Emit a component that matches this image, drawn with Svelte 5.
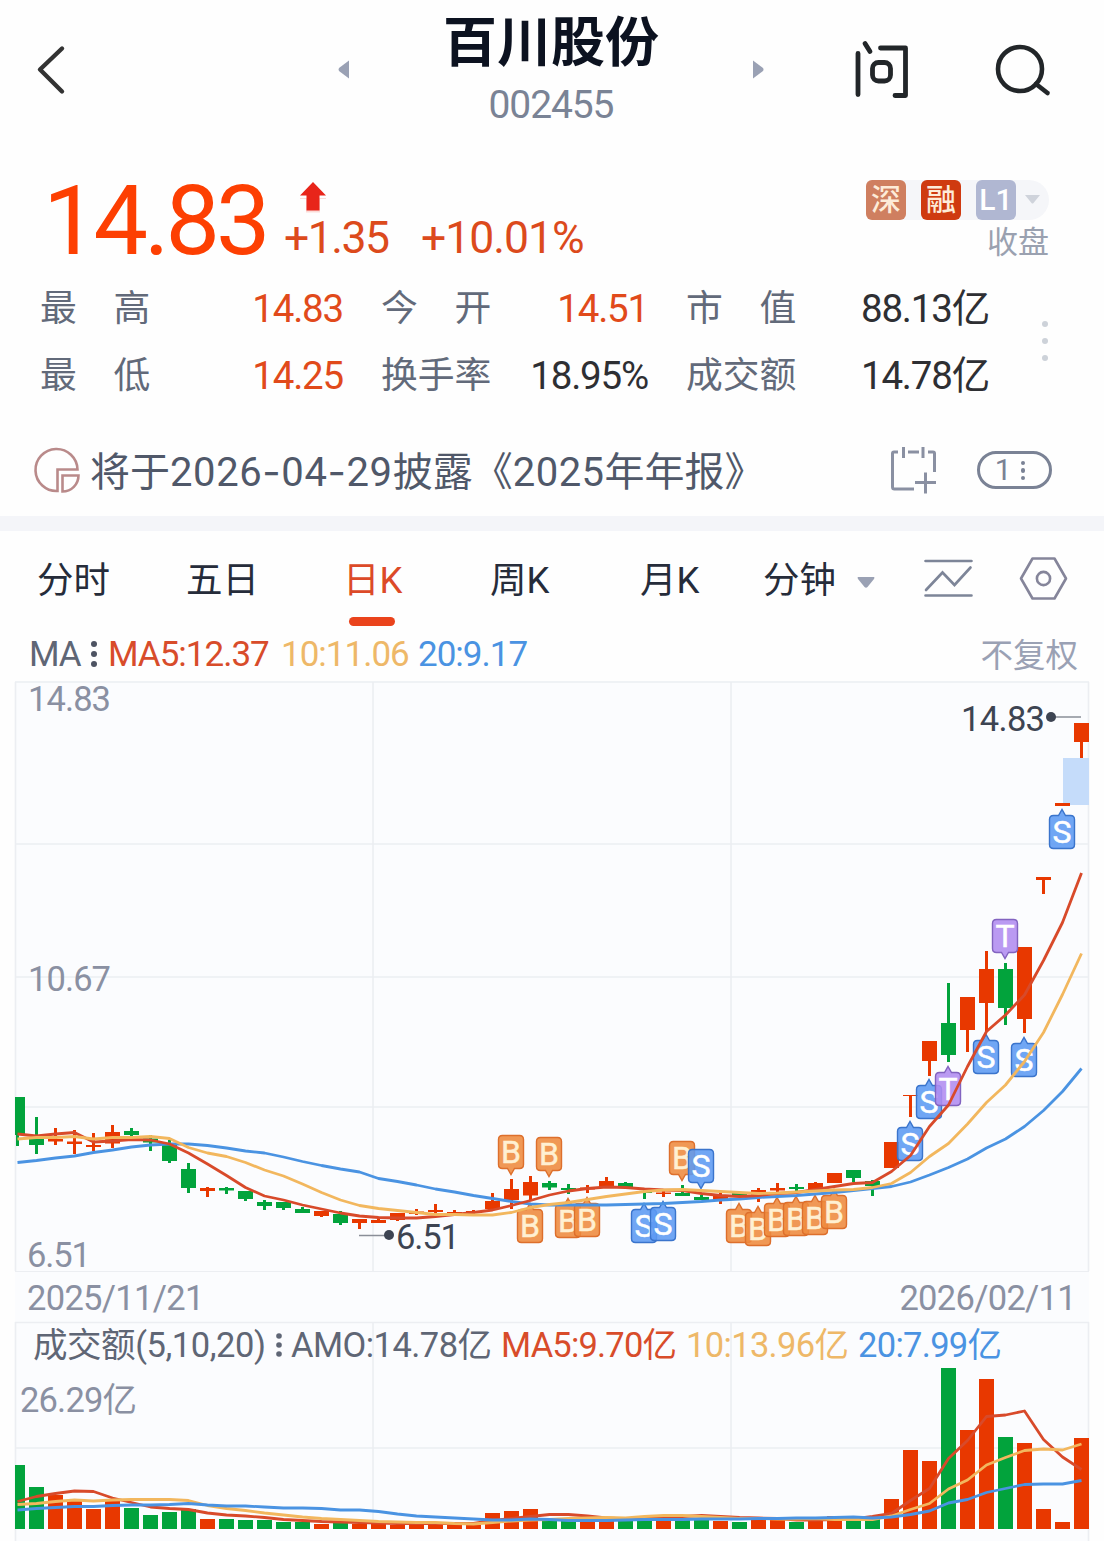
<script lang="ts">
  type Marker = { i: number; y: number; kind: 'B' | 'S' | 'T'; below: boolean };

  const stats = [
    [
      { label: '最　高', value: '14.83', up: true },
      { label: '今　开', value: '14.51', up: true },
      { label: '市　值', value: '88.13亿', up: false },
    ],
    [
      { label: '最　低', value: '14.25', up: true },
      { label: '换手率', value: '18.95%', up: false },
      { label: '成交额', value: '14.78亿', up: false },
    ],
  ];

  const tabs = ['分时', '五日', '日K', '周K', '月K'];
  let active = $state('日K');

  // body top, body bottom, high, low, 1 = up
  const candles = [
    [1097, 1135, 1097, 1146, 0], [1139, 1145, 1117, 1154, 0], [1139, 1141.5, 1128, 1145, 1], [1141.5, 1144, 1130, 1154, 1],
    [1145, 1147, 1133, 1151, 1], [1132, 1143.5, 1125, 1148, 1], [1131, 1135, 1128, 1140, 0], [1138.5, 1142.5, 1135, 1151, 0],
    [1145, 1161, 1140, 1163, 0], [1169, 1188, 1163, 1193, 0], [1188, 1191, 1187, 1197, 1], [1188, 1190.5, 1187, 1194, 0],
    [1191, 1199, 1191, 1201, 0], [1202, 1206, 1200, 1210, 0], [1202, 1208, 1202, 1210, 0], [1209, 1213, 1207, 1213, 0],
    [1211, 1216, 1211, 1217, 1], [1214, 1223, 1211, 1225, 0], [1219, 1223, 1219, 1229, 1], [1220, 1223, 1217, 1223, 1],
    [1213, 1220, 1213, 1221, 1], [1211.5, 1214, 1209, 1215, 1], [1210, 1212, 1204, 1214, 1], [1212, 1214, 1210, 1214, 1],
    [1211, 1213, 1210, 1214, 1], [1201, 1209, 1193, 1211, 1], [1189, 1200, 1179, 1209, 1], [1182, 1195.5, 1176, 1200, 1],
    [1183, 1187.5, 1181, 1190, 0], [1188, 1190, 1184, 1194, 0], [1187.5, 1189.5, 1185, 1193, 1], [1181, 1187, 1177, 1187, 1],
    [1183, 1187, 1182, 1188, 0], [1191, 1193, 1189, 1199, 0], [1192.5, 1194, 1190, 1197, 1], [1193, 1196, 1185, 1196, 0],
    [1197, 1200, 1195, 1200, 0], [1195, 1200.5, 1193, 1204, 1], [1193, 1196, 1193, 1196, 0], [1190, 1197, 1188, 1202, 1],
    [1188, 1190.5, 1183, 1193, 1], [1187, 1189, 1184, 1193, 0], [1183, 1190, 1182, 1190, 1], [1173, 1183, 1173, 1183, 1],
    [1170, 1178, 1170, 1182, 0], [1181, 1186, 1180, 1196, 0], [1142, 1168, 1142, 1168, 1], [1095, 1096, 1095, 1117, 1],
    [1041, 1061, 1041, 1076, 1], [1023, 1055, 983, 1062, 0], [997, 1030, 997, 1052, 1], [969, 1003, 951, 1031, 1],
    [969, 1008, 963, 1025, 0], [947, 1019, 947, 1033, 1], [877, 880, 877, 894, 1], [803, 806, 803, 806, 1],
    [723, 742, 723, 758, 1],
  ];

  const ma5 = [
    1134, 1136, 1134, 1132.5, 1142, 1141, 1139.5, 1140, 1144, 1153, 1164, 1175.5, 1187.5, 1196, 1200, 1205, 1209, 1213, 1216,
    1217.5, 1218, 1218, 1216.5, 1214.5, 1212.5, 1210, 1205.5, 1200.5, 1195, 1191, 1188.5, 1187, 1187.5, 1189, 1190, 1190.5,
    1193.5, 1195.5, 1196.5, 1195.5, 1193.5, 1192.5, 1189.5, 1186.5, 1183.5, 1182.5, 1171.5, 1155.5, 1126.5, 1105, 1066.5,
    1031.5, 1015, 995, 960.5, 922.5, 873,
  ];
  const ma10 = [
    1139, 1137.5, 1137.5, 1136.5, 1139, 1137.5, 1137.5, 1136.5, 1138.5, 1147.5, 1153, 1156.5, 1162.5, 1170, 1176, 1184,
    1192.5, 1200, 1205.5, 1208.5, 1210.5, 1212.5, 1214.5, 1214.5, 1215, 1215, 1212.5, 1207.5, 1204.5, 1202.5, 1199.5, 1196.5,
    1194, 1191.5, 1190, 1189.5, 1190.5, 1191.5, 1192.5, 1193.5, 1193, 1192, 1191, 1190, 1189.5, 1187.5, 1183.5, 1172.5,
    1156.5, 1143.5, 1124, 1102.5, 1085, 1061.5, 1032.5, 994.5, 953.5,
  ];
  const ma20 = [
    1162.5, 1160.5, 1158, 1156, 1152.5, 1150, 1147, 1145, 1144, 1144, 1145.5, 1148, 1151, 1153, 1157, 1161.5, 1165.5, 1169,
    1172, 1178.5, 1181.5, 1185, 1189, 1192, 1195.5, 1198.5, 1201.5, 1204, 1205, 1205, 1205, 1205, 1204.5, 1204, 1203.5,
    1202.5, 1201.5, 1200, 1199, 1197.5, 1196.5, 1195.5, 1194, 1192.5, 1190.5, 1188.5, 1186.5, 1182, 1175, 1167.5, 1159, 1148,
    1139, 1126.5, 1110.5, 1091.5, 1068.5,
  ];

  const markers: Marker[] = [
    { i: 26, y: 1135, kind: 'B', below: false },
    { i: 27, y: 1209, kind: 'B', below: true },
    { i: 28, y: 1137, kind: 'B', below: false },
    { i: 29, y: 1204, kind: 'B', below: true },
    { i: 30, y: 1203, kind: 'B', below: true },
    { i: 33, y: 1209, kind: 'S', below: true },
    { i: 34, y: 1207, kind: 'S', below: true },
    { i: 35, y: 1141, kind: 'B', below: false },
    { i: 36, y: 1149, kind: 'S', below: false },
    { i: 38, y: 1209, kind: 'B', below: true },
    { i: 39, y: 1212, kind: 'B', below: true },
    { i: 40, y: 1203, kind: 'B', below: true },
    { i: 41, y: 1202, kind: 'B', below: true },
    { i: 42, y: 1201, kind: 'B', below: true },
    { i: 43, y: 1195, kind: 'B', below: true },
    { i: 47, y: 1127, kind: 'S', below: true },
    { i: 48, y: 1085, kind: 'S', below: true },
    { i: 49, y: 1072, kind: 'T', below: true },
    { i: 51, y: 1040, kind: 'S', below: true },
    { i: 52, y: 919, kind: 'T', below: false },
    { i: 53, y: 1043, kind: 'S', below: true },
    { i: 55, y: 815, kind: 'S', below: true },
  ];

  const volTops = [
    1465, 1487, 1495, 1501, 1509, 1500, 1508, 1515, 1512, 1509, 1519, 1519, 1520, 1520, 1522, 1522, 1524, 1523, 1524, 1524,
    1525, 1525, 1525, 1525, 1525, 1513, 1511, 1509, 1521, 1520, 1521, 1521, 1520, 1520, 1521, 1520, 1519, 1521, 1522, 1519,
    1519, 1522, 1520, 1516, 1518, 1519, 1499, 1450, 1461, 1368, 1430, 1379, 1437, 1443, 1509, 1522, 1438,
  ];
  const vol5 = [
    1501.5, 1496.5, 1493.5, 1491, 1491.5, 1498, 1502.5, 1507, 1508.5, 1509.5, 1513, 1515, 1516, 1517.5, 1519.5, 1520.5,
    1521.5, 1522, 1522.5, 1523, 1523.5, 1523.5, 1523.5, 1523.5, 1523.5, 1520.5, 1518.5, 1516.5, 1514.5, 1514.5, 1516, 1518,
    1519, 1518, 1517.5, 1516.5, 1515.5, 1516.5, 1517.5, 1518, 1518.5, 1520, 1520, 1519.5, 1519, 1516.5, 1513.5, 1500.5,
    1488.5, 1458.5, 1440.5, 1416.5, 1415, 1411, 1439.5, 1457, 1469.5,
  ];
  const vol10 = [
    1504.5, 1503.5, 1501.5, 1500, 1501, 1500, 1499.5, 1499.5, 1499.5, 1500.5, 1505.5, 1508.5, 1510.5, 1513, 1515, 1517,
    1518.5, 1519.5, 1520.5, 1521.5, 1522, 1522.5, 1522.5, 1523.5, 1524, 1522.5, 1521, 1520, 1519.5, 1518.5, 1518, 1517.5,
    1518, 1516.5, 1515.5, 1515.5, 1516.5, 1517.5, 1518.5, 1518.5, 1519, 1519, 1518.5, 1519.5, 1519.5, 1519.5, 1516, 1509.5,
    1503.5, 1489, 1480, 1465, 1457.5, 1450.5, 1449, 1450, 1444,
  ];
  const vol20 = [
    1510, 1508.5, 1507.5, 1506.5, 1506.5, 1505.5, 1505, 1505, 1504.5, 1503.5, 1505, 1506, 1506, 1507, 1508, 1508, 1508.5,
    1510, 1510, 1511.5, 1514, 1516, 1517, 1518, 1519, 1520, 1520, 1519, 1519.5, 1520.5, 1520.5, 1520.5, 1520, 1519.5, 1519.5,
    1519.5, 1519, 1519, 1519, 1518.5, 1518.5, 1518, 1518, 1517.5, 1517, 1518, 1517, 1514.5, 1511, 1503, 1499.5, 1492.5,
    1488.5, 1484.5, 1484, 1484, 1480.5,
  ];

  const cx = (i: number) => 17.5 + i * 19;
  const points = (ys: number[]) => ys.map((y, i) => `${cx(i)},${y}`).join(' ');

  // the first bar is cut by the left edge of the plot
  const barX = (i: number) => Math.max(15, cx(i) - 7.5);
  const barW = (i: number) => Math.min(1089, cx(i) + 7.5) - barX(i);

  // rounded tag with a small pointer towards its candle
  function tagPath(m: Marker): string {
    const x = cx(m.i) - 13;
    const t = m.y + 0.5;
    const b = t + 33;
    const tip = m.below
      ? `M${x + 4} ${t}H${x + 9}L${x + 12.5} ${t - 6}L${x + 16} ${t}H${x + 21}`
      : `M${x + 4} ${t}H${x + 21}`;
    const foot = m.below ? `H${x + 4}` : `H${x + 16}L${x + 12.5} ${b + 6}L${x + 9} ${b}H${x + 4}`;
    return `${tip}q4 0 4 4V${b - 4}q0 4 -4 4${foot}q-4 0 -4 -4V${t + 4}q0 -4 4 -4z`;
  }
</script>

<div class="page">
  <header class="topbar">
    <svg class="back" width="30" height="52" viewBox="0 0 30 52">
      <path d="M26 4.500 4 25.500 26 47.500" fill="none" stroke="#333" stroke-width="4.400" stroke-linecap="round" stroke-linejoin="round" />
    </svg>
    <svg class="prev" width="12" height="20" viewBox="0 0 12 20"><path d="M11 .5v18L1 11q-1-1.500 0-3z" fill="#9aa1b4" /></svg>
    <div class="heading">
      <h1>百川股份</h1>
      <span class="code">002455</span>
    </div>
    <svg class="next" width="12" height="20" viewBox="0 0 12 20"><path d="M0 .5v18l10-7.500q1-1.500 0-3z" fill="#9aa1b4" /></svg>
    <svg class="ask" width="56" height="60" viewBox="0 0 56 60" fill="none" stroke="#222629" stroke-width="4.800" stroke-linecap="round">
      <path d="M4 13.500v41M11 3.500l5 8M26.500 8H51.500v47.500H41" stroke-linejoin="round" />
      <rect x="18.500" y="22.500" width="18" height="18.500" rx="6" />
    </svg>
    <svg class="search" width="58" height="54" viewBox="0 0 58 54" fill="none" stroke="#222629" stroke-width="4.600" stroke-linecap="round">
      <ellipse cx="26" cy="26" rx="22" ry="22" />
      <path d="M42 41l11.500 9" />
    </svg>
  </header>

  <section class="quote">
    <span class="price">14.83</span>
    <div class="change">
      <svg class="arrow" width="30" height="34" viewBox="0 0 30 34">
        <path d="M2 17h26v1h-6v13.500H8V18H2z" fill="#fbdcd8" />
        <path d="M15 1 28 14.500H21.500V29.500H8.500V14.500H2z" fill="#e8251a" />
      </svg>
      <div class="delta"><span class="diff">+1.35</span><span>+10.01%</span></div>
    </div>
    <div class="flags">
      <div class="badges">
        <span class="badge sz">深</span>
        <span class="badge rong">融</span>
        <span class="badge level">L1</span>
        <svg width="17" height="12" viewBox="0 0 17 12"><path d="M1 1h15L9.500 9q-1 1.200-2 0z" fill="#cfd3db" /></svg>
      </div>
      <span class="closed">收盘</span>
    </div>
  </section>

  <section class="stats">
    <div class="stat-rows">
      {#each stats as row}
        <div class="stat-row">
          {#each row as s}
            <span class="label">{s.label}</span>
            <span class="value" class:up={s.up}>{s.value}</span>
          {/each}
        </div>
      {/each}
    </div>
    <div class="more"><i></i><i></i><i></i></div>
  </section>

  <section class="notice">
    <svg width="46" height="48" viewBox="0 0 46 48" fill="none" stroke="#b98a8a" stroke-width="2.600">
      <path d="M22.500 46A21 21 0 1 1 42.500 24.500H22.500z" />
      <path d="M27.500 30.500h16a16 16 0 0 1-16 16z" />
    </svg>
    <p>将于<span class="date">2026<b>-</b>04<b>-</b>29</span>披露《<span class="year">2025</span>年年报》</p>
    <svg class="calendar" width="48" height="50" viewBox="0 0 48 50" fill="none" stroke="#8a90a2" stroke-width="3">
      <path d="M8 8H4q-1.500 0-1.500 1.500V43q0 2 2 2H24M18 8h11M38 8h5q1.500 0 1.500 1.500V28M13.500 3v11M33 3v11M25 38.500h21M35.500 28.500v21" />
    </svg>
    <span class="count">1<em><i></i><i></i><i></i></em></span>
  </section>

  <nav class="tabs">
    {#each tabs as tab}
      <button class:active={tab === active} onclick={() => (active = tab)}>{tab}</button>
    {/each}
    <button class="minutes">分钟</button>
    <svg class="caret" width="20" height="14" viewBox="0 0 20 14"><path d="M2 1h16q1 .5 0 2l-6.500 8q-1.500 1.500-3 0L2 3Q1 1.500 2 1z" fill="#9aa1b4" /></svg>
    <svg class="tool-line" width="50" height="42" viewBox="0 0 50 42" fill="none" stroke="#7d8598" stroke-width="2.600" stroke-linecap="round">
      <path d="M1.500 3h46M1.500 37.500h46" />
      <path d="M2 32 18.500 14.500 30.500 27 46.500 9.500" />
    </svg>
    <svg class="tool-set" width="50" height="46" viewBox="0 0 50 46" fill="none" stroke="#85859a" stroke-width="2.600">
      <path d="M13.500 2.500h22L47 22.500 35.500 42.500h-22L2 22.500z" stroke-linejoin="round" />
      <circle cx="24.500" cy="22.500" r="6.600" />
    </svg>
  </nav>

  <div class="legend">
    <span class="name">MA</span>
    <span class="dots"><i></i><i></i><i></i></span>
    <span class="m5">MA5:12.37</span>
    <span class="m10">10:11.06</span>
    <span class="m20">20:9.17</span>
    <span class="adjust">不复权</span>
  </div>

  <div class="charts">
    <svg class="kline" width="1074" height="590" viewBox="15 681 1074 590">
      <g class="grid">
        <path d="M15 682H1089M15 844H1089M15 977H1089M15 1107H1089M15.500 682V1271M373 682V1271M731 682V1271M1088.500 682V1271" />
      </g>
      <g class="axis">
        <text x="28" y="710.5" textLength="83">14.83</text>
        <text x="28" y="991" textLength="83">10.67</text>
        <text x="27" y="1267" textLength="64">6.51</text>
      </g>
      <rect x="1063" y="758" width="26" height="47" fill="#c5dcfa" />
      {#each candles as [top, bottom, high, low, up], i}
        <g class={up ? 'rise' : 'fall'}>
          <rect x={cx(i) - 1.5} y={high} width="3" height={low - high} />
          <rect x={barX(i)} y={top} width={barW(i)} height={bottom - top} />
        </g>
      {/each}
      {#each markers as m}
        <g class="tag tag-{m.kind}">
          <path d={tagPath(m)} />
          <text x={cx(m.i) - 0.5} y={m.y + 28}>{m.kind}</text>
        </g>
      {/each}
      <polyline class="line l20" points={points(ma20)} />
      <polyline class="line l5" points={points(ma5)} />
      <polyline class="line l10" points={points(ma10)} />
      <g class="callout">
        <path d="M1051 717H1081M359 1235.500H389" />
        <circle cx="1051" cy="717" r="5" />
        <circle cx="389" cy="1235" r="5" />
        <text x="961" y="730.5" textLength="84">14.83</text>
        <text x="396" y="1248.5" textLength="64">6.51</text>
      </g>
    </svg>

    <div class="dates"><span>2025/11/21</span><span>2026/02/11</span></div>

    <svg class="volume" width="1074" height="219" viewBox="15 1322 1074 219">
      <g class="grid">
        <path d="M15 1322.500H1089M15 1448H1089M15.500 1322V1541M373 1322V1529M731 1322V1529M1088.500 1322V1541" />
      </g>
      {#each volTops as top, i}
        <rect class={candles[i][4] ? 'rise' : 'fall'} x={barX(i)} y={top} width={barW(i)} height={1529 - top} />
      {/each}
      <polyline class="line l5" points={points(vol5)} />
      <polyline class="line l10" points={points(vol10)} />
      <polyline class="line l20" points={points(vol20)} />
      <g class="vlabels">
        <text x="33" y="1357" fill="#5f6675" textLength="233">成交额(5,10,20)</text>
        <circle cx="279" cy="1336" r="2.800" /><circle cx="279" cy="1345" r="2.800" /><circle cx="279" cy="1354" r="2.800" />
        <text x="291" y="1357" fill="#5f6675" textLength="201">AMO:14.78亿</text>
        <text x="501" y="1357" fill="#d84c2a" textLength="176">MA5:9.70亿</text>
        <text x="686" y="1357" fill="#eeb868" textLength="163">10:13.96亿</text>
        <text x="858" y="1357" fill="#4a93e2" textLength="144">20:7.99亿</text>
        <text x="20" y="1412" fill="#8a90a2" textLength="117">26.29亿</text>
      </g>
    </svg>
  </div>
</div>

<style>
  :global(body) {
    background: #fefefe;
  }

  .page {
    width: 1104px;
    height: 1541px;
    overflow: hidden;
    font-family: Roboto, 'Noto Sans CJK SC', sans-serif;
    color: #2e2f33;
  }

  .page svg {
    display: block;
    flex: none;
    overflow: visible;
  }

  .topbar {
    display: grid;
    grid-template-columns: 300px 52px 326px 140px 140px 1fr;
    align-items: center;
    height: 140px;
    box-sizing: border-box;
    padding-left: 36px;
  }

  .prev {
    margin-left: 2px;
  }

  .heading {
    display: flex;
    flex-direction: column;
    align-items: center;
    height: 140px;
  }

  h1 {
    margin: 8px 0 0;
    font-size: 54px;
    line-height: 72px;
    font-weight: 700;
    color: #0c1220;
  }

  .code {
    font-size: 39px;
    line-height: 50px;
    letter-spacing: -1.1px;
    color: #7a8395;
  }

  .next {
    margin-left: 39px;
  }

  .quote {
    display: flex;
    height: 132px;
    padding: 0 55px 0 43px;
  }

  .price {
    width: 240px;
    font-size: 97px;
    line-height: 114px;
    letter-spacing: -4px;
    margin-top: 24px;
    color: #fd3f02;
  }

  .change {
    padding-top: 41px;
    color: #dc4a1c;
  }

  .arrow {
    margin-left: 15px;
  }

  .delta {
    display: flex;
    margin-left: 1px;
    font-size: 44.5px;
    line-height: 46px;
    letter-spacing: -1px;
  }

  .diff {
    width: 137px;
    letter-spacing: -1.5px;
  }

  .flags {
    display: flex;
    flex-direction: column;
    align-items: flex-end;
    margin-left: auto;
    padding-top: 40px;
  }

  .badges {
    display: flex;
    align-items: center;
    gap: 15px;
    width: 183px;
    height: 40px;
    border-radius: 6px 20px 20px 6px;
    background: #f5f6f9;
  }

  .badges svg {
    margin-left: -7px;
  }

  .badge {
    width: 40px;
    height: 40px;
    border-radius: 6px;
    font-size: 30px;
    line-height: 40px;
    font-weight: 500;
    text-align: center;
    color: #fff;
  }

  .sz {
    background: #cf7f60;
    color: #fdebd8;
  }

  .rong {
    background: #cf3a10;
    color: #fdebd8;
  }

  .level {
    background: #b0b7d2;
  }

  .closed {
    margin-top: 5px;
    font-size: 31px;
    line-height: 36px;
    color: #9aa1b0;
  }

  .stats {
    display: flex;
    padding-left: 40px;
    height: 150px;
  }

  .stat-rows {
    padding-top: 3px;
  }

  .stat-row {
    display: grid;
    grid-template-columns: 112px 191px 150px 155px 149px 192px;
    align-items: center;
    width: 950px;
    height: 67px;
    line-height: 67px;
  }

  .label {
    font-size: 36.8px;
    color: #626a7a;
    white-space: nowrap;
  }

  .label:nth-child(n + 3) {
    padding-left: 38px;
  }

  .value {
    text-align: right;
    font-size: 38.5px;
    letter-spacing: -1.2px;
    white-space: nowrap;
  }

  .up {
    color: #e14a1b;
  }

  .more {
    display: flex;
    flex-direction: column;
    gap: 11px;
    margin: 49px 0 0 52px;
  }

  .more i {
    width: 6px;
    height: 6px;
    border-radius: 50%;
    background: #cdd2d9;
  }

  .notice {
    display: flex;
    align-items: center;
    height: 94px;
    padding-left: 35px;
    border-bottom: 15px solid #f4f5f9;
  }

  .notice p {
    width: 800px;
    margin: 6px 0 0 9px;
    font-size: 40px;
    line-height: 60px;
    color: #505869;
    white-space: nowrap;
  }

  .date {
    letter-spacing: 0.6px;
  }

  .date b {
    font-family: Inter, sans-serif;
    font-weight: 400;
  }

  .year {
    letter-spacing: 0.5px;
  }

  .count {
    display: flex;
    align-items: center;
    justify-content: center;
    gap: 9px;
    width: 75px;
    height: 38px;
    box-sizing: border-box;
    margin: 1px 0 0 39px;
    padding-right: 9px;
    border: 3px solid #7a8295;
    border-radius: 19px;
    font-size: 30px;
    line-height: 34px;
    color: #7a8295;
  }

  .count em {
    display: flex;
    flex-direction: column;
    gap: 3px;
    margin-top: 2px;
  }

  .count i {
    width: 4.5px;
    height: 4.5px;
    border-radius: 50%;
    background: #7a8295;
  }

  .tabs {
    display: flex;
    align-items: center;
    height: 96px;
    padding-left: 37px;
  }

  .tabs button {
    position: relative;
    height: 96px;
    padding: 0 0 4px;
    border: 0;
    background: none;
    font-family: inherit;
    font-size: 36.5px;
    text-align: left;
    color: #262c3a;
    cursor: pointer;
  }

  .tabs button:nth-child(1) {
    width: 149px;
  }

  .tabs button:nth-child(2) {
    width: 157px;
  }

  .tabs button:nth-child(3) {
    width: 147px;
  }

  .tabs button:nth-child(4) {
    width: 150px;
  }

  .tabs button:nth-child(5) {
    width: 123px;
  }

  .tabs .minutes {
    width: 93px;
  }

  .tabs .active {
    color: #dc4a28;
  }

  .active::after {
    content: '';
    position: absolute;
    left: 6px;
    bottom: 1px;
    width: 46px;
    height: 9px;
    border-radius: 5px;
    background: #ea431c;
  }

  .caret {
    margin-top: 8px;
  }

  .tool-line {
    margin-left: 48px;
  }

  .tool-set {
    margin-left: 45px;
  }

  .legend {
    display: flex;
    align-items: center;
    height: 54px;
    padding: 0 26px 0 29px;
    font-size: 35px;
    letter-spacing: -1px;
    white-space: nowrap;
  }

  .name {
    width: 62px;
    color: #5f6675;
  }

  .dots {
    display: flex;
    flex-direction: column;
    gap: 4px;
    width: 17px;
    color: #4d5362;
  }

  .dots i {
    width: 6px;
    height: 6px;
    border-radius: 50%;
    background: currentColor;
  }

  .m5 {
    width: 173px;
    color: #d84c2a;
  }

  .m10 {
    width: 137px;
    color: #eeb868;
  }

  .m20 {
    color: #4a93e2;
  }

  .adjust {
    margin: -4px 0 0 auto;
    font-size: 32.5px;
    letter-spacing: 0;
    color: #9aa1b4;
  }

  .charts {
    width: 1074px;
    margin-left: 15px;
    background: #fbfcfe;
  }

  .grid path {
    fill: none;
    stroke: #eceef2;
    stroke-width: 1.6;
  }

  .kline text,
  .vlabels text {
    font-size: 34.5px;
  }

  .axis text {
    fill: #8a90a2;
  }

  .rise {
    fill: #e83800;
  }

  .fall {
    fill: #02a33c;
  }

  .line {
    fill: none;
    stroke-width: 2.8;
    stroke-linejoin: round;
  }

  .l5 {
    stroke: #d84a2a;
  }

  .l10 {
    stroke: #f2b75e;
  }

  .l20 {
    stroke: #4a93e2;
  }

  .kline .tag text {
    font-size: 32px;
    text-anchor: middle;
    fill: #fff;
    stroke: #fff;
    stroke-width: 0.5;
  }

  .tag path {
    fill-opacity: 0.88;
    stroke-width: 1.4;
  }

  .tag-B path {
    fill: #ee8a3e;
    stroke: #dd6f2c;
  }

  .kline .tag-B text {
    fill: #fff0d2;
    stroke: #fff0d2;
  }

  .tag-S path {
    fill: #5c9af2;
    stroke: #3a74cc;
  }

  .tag-T path {
    fill: #b08cf0;
    stroke: #8263c0;
  }

  .callout {
    fill: #3d4452;
  }

  .callout path {
    stroke: #8a8e98;
    stroke-width: 1.6;
  }

  .dates {
    display: flex;
    justify-content: space-between;
    align-items: center;
    height: 51px;
    box-sizing: border-box;
    padding: 2px 13px 0 12px;
    border-top: 1.6px solid #eceef2;
    font-size: 34.5px;
    letter-spacing: -0.7px;
    color: #8a90a2;
  }

  .vlabels {
    fill: #5f6675;
  }
</style>
